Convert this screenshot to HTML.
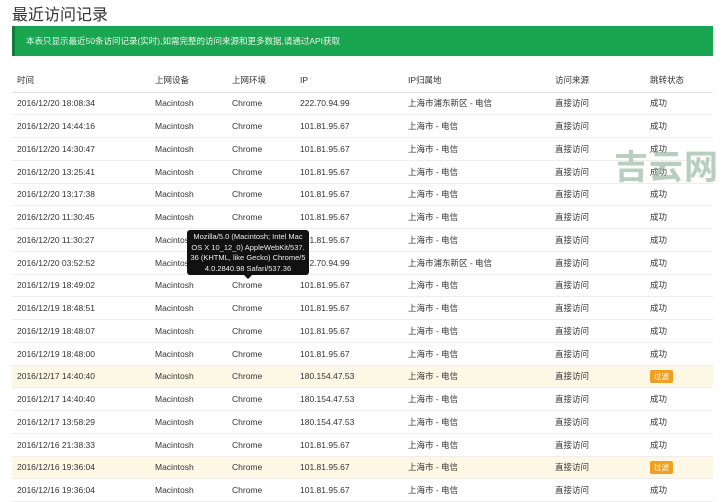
<!DOCTYPE html>
<html><head><meta charset="utf-8"><style>
body{margin:0;background:#fff;font-family:"Liberation Sans","Noto Sans CJK SC",sans-serif;color:#333;width:728px;height:500px;overflow:hidden;position:relative}
h1{position:absolute;left:12px;top:1px;margin:0;font-size:16px;font-weight:normal;color:#333}
.banner{position:absolute;left:12px;top:26px;width:701px;height:30px;background:#1aa650;border-left:3px solid #127a3a;box-sizing:border-box;color:#e9f7ee;font-size:8.5px;line-height:30px;padding-left:11px}
table{position:absolute;left:12px;top:68px;width:701px;border-collapse:collapse;font-size:8.5px}
td,th{height:22.75px;padding:0 0 0 5px;text-align:left;border-bottom:1px solid #eee;box-sizing:border-box;font-weight:normal;white-space:nowrap}
th{height:24px;border-bottom:1px solid #e4e4e4}
tr.y td{background:#fdf8e6}
.tag{display:inline-block;background:#f0a020;color:#fff;border-radius:2px;padding:1px 4px;font-size:7.5px}
.tip{position:absolute;left:187px;top:230px;width:122px;height:45px;background:#111;color:#eee;border-radius:3px;font-size:7.5px;line-height:10.5px;text-align:center;padding-top:2px;box-sizing:border-box}
.tip:after{content:"";position:absolute;left:57px;bottom:-4px;border:4px solid transparent;border-bottom:0;border-top-color:#111}
.wm{position:absolute;left:614px;top:140px;font-size:34px;color:rgba(160,190,168,.75);letter-spacing:1px;font-family:"Noto Sans CJK SC",sans-serif;font-weight:bold}
</style></head><body>
<h1>最近访问记录</h1>
<div class="banner">本表只显示最近50条访问记录(实时),如需完整的访问来源和更多数据,请通过API获取</div>
<table>
<colgroup><col style="width:138px"><col style="width:77px"><col style="width:68px"><col style="width:108px"><col style="width:147px"><col style="width:95px"><col></colgroup>
<tr><th>时间</th><th>上网设备</th><th>上网环境</th><th>IP</th><th>IP归属地</th><th>访问来源</th><th>跳转状态</th></tr>
<tr><td>2016/12/20 18:08:34</td><td>Macintosh</td><td>Chrome</td><td>222.70.94.99</td><td>上海市浦东新区 - 电信</td><td>直接访问</td><td>成功</td></tr>
<tr><td>2016/12/20 14:44:16</td><td>Macintosh</td><td>Chrome</td><td>101.81.95.67</td><td>上海市 - 电信</td><td>直接访问</td><td>成功</td></tr>
<tr><td>2016/12/20 14:30:47</td><td>Macintosh</td><td>Chrome</td><td>101.81.95.67</td><td>上海市 - 电信</td><td>直接访问</td><td>成功</td></tr>
<tr><td>2016/12/20 13:25:41</td><td>Macintosh</td><td>Chrome</td><td>101.81.95.67</td><td>上海市 - 电信</td><td>直接访问</td><td>成功</td></tr>
<tr><td>2016/12/20 13:17:38</td><td>Macintosh</td><td>Chrome</td><td>101.81.95.67</td><td>上海市 - 电信</td><td>直接访问</td><td>成功</td></tr>
<tr><td>2016/12/20 11:30:45</td><td>Macintosh</td><td>Chrome</td><td>101.81.95.67</td><td>上海市 - 电信</td><td>直接访问</td><td>成功</td></tr>
<tr><td>2016/12/20 11:30:27</td><td>Macintosh</td><td>Chrome</td><td>101.81.95.67</td><td>上海市 - 电信</td><td>直接访问</td><td>成功</td></tr>
<tr><td>2016/12/20 03:52:52</td><td>Macintosh</td><td>Chrome</td><td>222.70.94.99</td><td>上海市浦东新区 - 电信</td><td>直接访问</td><td>成功</td></tr>
<tr><td>2016/12/19 18:49:02</td><td>Macintosh</td><td>Chrome</td><td>101.81.95.67</td><td>上海市 - 电信</td><td>直接访问</td><td>成功</td></tr>
<tr><td>2016/12/19 18:48:51</td><td>Macintosh</td><td>Chrome</td><td>101.81.95.67</td><td>上海市 - 电信</td><td>直接访问</td><td>成功</td></tr>
<tr><td>2016/12/19 18:48:07</td><td>Macintosh</td><td>Chrome</td><td>101.81.95.67</td><td>上海市 - 电信</td><td>直接访问</td><td>成功</td></tr>
<tr><td>2016/12/19 18:48:00</td><td>Macintosh</td><td>Chrome</td><td>101.81.95.67</td><td>上海市 - 电信</td><td>直接访问</td><td>成功</td></tr>
<tr class="y"><td>2016/12/17 14:40:40</td><td>Macintosh</td><td>Chrome</td><td>180.154.47.53</td><td>上海市 - 电信</td><td>直接访问</td><td><span class="tag">过滤</span></td></tr>
<tr><td>2016/12/17 14:40:40</td><td>Macintosh</td><td>Chrome</td><td>180.154.47.53</td><td>上海市 - 电信</td><td>直接访问</td><td>成功</td></tr>
<tr><td>2016/12/17 13:58:29</td><td>Macintosh</td><td>Chrome</td><td>180.154.47.53</td><td>上海市 - 电信</td><td>直接访问</td><td>成功</td></tr>
<tr><td>2016/12/16 21:38:33</td><td>Macintosh</td><td>Chrome</td><td>101.81.95.67</td><td>上海市 - 电信</td><td>直接访问</td><td>成功</td></tr>
<tr class="y"><td>2016/12/16 19:36:04</td><td>Macintosh</td><td>Chrome</td><td>101.81.95.67</td><td>上海市 - 电信</td><td>直接访问</td><td><span class="tag">过滤</span></td></tr>
<tr><td>2016/12/16 19:36:04</td><td>Macintosh</td><td>Chrome</td><td>101.81.95.67</td><td>上海市 - 电信</td><td>直接访问</td><td>成功</td></tr>
</table>
<div class="tip">Mozilla/5.0 (Macintosh; Intel Mac<br>OS X 10_12_0) AppleWebKit/537.<br>36 (KHTML, like Gecko) Chrome/5<br>4.0.2840.98 Safari/537.36</div>
<div class="wm">吉云网</div>
</body></html>
